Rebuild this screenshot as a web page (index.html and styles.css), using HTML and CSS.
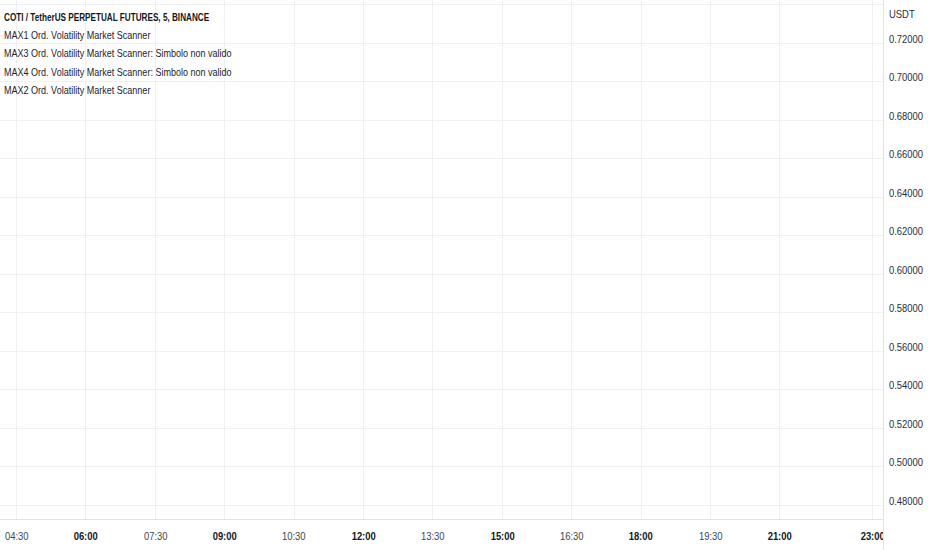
FILE: index.html
```html
<!DOCTYPE html>
<html lang="it">
<head>
<meta charset="utf-8">
<title>COTI / TetherUS PERPETUAL FUTURES</title>
<link rel="stylesheet" href="styles.css">
</head>
<body>
<div class="chart">
  <div class="pane">
    <svg class="grid" width="883" height="519" viewBox="0 0 883 519" shape-rendering="crispEdges">
      <g stroke="#eef0f4" stroke-width="1">
        <line x1="0" x2="883" y1="4.5" y2="4.5"/>
        <line x1="0" x2="883" y1="43.5" y2="43.5"/>
        <line x1="0" x2="883" y1="81.5" y2="81.5"/>
        <line x1="0" x2="883" y1="120.5" y2="120.5"/>
        <line x1="0" x2="883" y1="158.5" y2="158.5"/>
        <line x1="0" x2="883" y1="197.5" y2="197.5"/>
        <line x1="0" x2="883" y1="235.5" y2="235.5"/>
        <line x1="0" x2="883" y1="274.5" y2="274.5"/>
        <line x1="0" x2="883" y1="312.5" y2="312.5"/>
        <line x1="0" x2="883" y1="351.5" y2="351.5"/>
        <line x1="0" x2="883" y1="389.5" y2="389.5"/>
        <line x1="0" x2="883" y1="428.5" y2="428.5"/>
        <line x1="0" x2="883" y1="466.5" y2="466.5"/>
        <line x1="0" x2="883" y1="505.5" y2="505.5"/>
        <line y1="0" y2="519" x1="16.5" x2="16.5"/>
        <line y1="0" y2="519" x1="85.5" x2="85.5"/>
        <line y1="0" y2="519" x1="155.5" x2="155.5"/>
        <line y1="0" y2="519" x1="224.5" x2="224.5"/>
        <line y1="0" y2="519" x1="294.5" x2="294.5"/>
        <line y1="0" y2="519" x1="363.5" x2="363.5"/>
        <line y1="0" y2="519" x1="432.5" x2="432.5"/>
        <line y1="0" y2="519" x1="502.5" x2="502.5"/>
        <line y1="0" y2="519" x1="571.5" x2="571.5"/>
        <line y1="0" y2="519" x1="641.5" x2="641.5"/>
        <line y1="0" y2="519" x1="710.5" x2="710.5"/>
        <line y1="0" y2="519" x1="779.5" x2="779.5"/>
        <line y1="0" y2="519" x1="872.5" x2="872.5"/>
      </g>
    </svg>
    <div class="legend">
      <div class="legend-title">COTI / TetherUS PERPETUAL FUTURES, 5, BINANCE</div>
      <div class="legend-row">MAX1 Ord. Volatility Market Scanner</div>
      <div class="legend-row">MAX3 Ord. Volatility Market Scanner: Simbolo non valido</div>
      <div class="legend-row">MAX4 Ord. Volatility Market Scanner: Simbolo non valido</div>
      <div class="legend-row">MAX2 Ord. Volatility Market Scanner</div>
    </div>
  </div>
  <div class="price-axis">
    <div class="unit">USDT</div>
    <div class="price">0.72000</div>
    <div class="price">0.70000</div>
    <div class="price">0.68000</div>
    <div class="price">0.66000</div>
    <div class="price">0.64000</div>
    <div class="price">0.62000</div>
    <div class="price">0.60000</div>
    <div class="price">0.58000</div>
    <div class="price">0.56000</div>
    <div class="price">0.54000</div>
    <div class="price">0.52000</div>
    <div class="price">0.50000</div>
    <div class="price">0.48000</div>
  </div>
  <div class="time-axis">
    <div class="tick first">04:30</div>
    <div class="tick major">06:00</div>
    <div class="tick">07:30</div>
    <div class="tick major">09:00</div>
    <div class="tick">10:30</div>
    <div class="tick major">12:00</div>
    <div class="tick">13:30</div>
    <div class="tick major">15:00</div>
    <div class="tick">16:30</div>
    <div class="tick major">18:00</div>
    <div class="tick">19:30</div>
    <div class="tick major">21:00</div>
    <div class="tick major last">23:00</div>
  </div>
  <div class="corner"></div>
</div>
</body>
</html>
```

FILE: styles.css
```css
html, body {
  margin: 0;
  padding: 0;
  background: #ffffff;
}

.chart {
  display: grid;
  grid-template-columns: 883px 49px;
  grid-template-rows: 519px 31px;
  width: 932px;
  height: 550px;
  overflow: hidden;
  font-family: "Liberation Sans", Arial, sans-serif;
  color: #131722;
}

.pane {
  position: relative;
  overflow: hidden;
}

.grid {
  display: block;
}

.legend {
  position: absolute;
  top: 8px;
  left: 4px;
  font-size: 11px;
  line-height: 18.2px;
  color: #1e222d;
  white-space: nowrap;
  transform: scaleX(0.82);
  transform-origin: left top;
}

.legend-title {
  font-weight: bold;
  color: #131722;
  transform: scaleX(0.905);
  transform-origin: left center;
}

.price-axis {
  border-left: 1px solid #e0e3eb;
  display: flex;
  flex-direction: column;
  padding-left: 5px;
  font-size: 11.5px;
  color: #2a2e39;
  overflow: hidden;
}

.unit {
  box-sizing: border-box;
  height: 23.75px;
  padding-top: 7.5px;
  line-height: 12px;
  transform: scaleX(0.82);
  transform-origin: left center;
}

.price {
  flex: none;
  height: 38.5px;
  line-height: 38.5px;
  transform: scaleX(0.82);
  transform-origin: left center;
}

.time-axis {
  border-top: 1px solid #e0e3eb;
  display: flex;
  overflow: hidden;
  font-size: 11.5px;
  line-height: 30px;
  padding-top: 1px;
  box-sizing: border-box;
  color: #40444f;
}

.tick {
  flex: none;
  width: 69.4px;
  text-align: center;
  transform: scaleX(0.82);
  transform-origin: center center;
}

.tick.first {
  margin-left: -18.2px;
}

.tick.last {
  margin-left: 23.1px;
}

.tick.major {
  font-weight: bold;
  color: #131722;
}

.corner {
  border-left: 1px solid #e0e3eb;
}
```
